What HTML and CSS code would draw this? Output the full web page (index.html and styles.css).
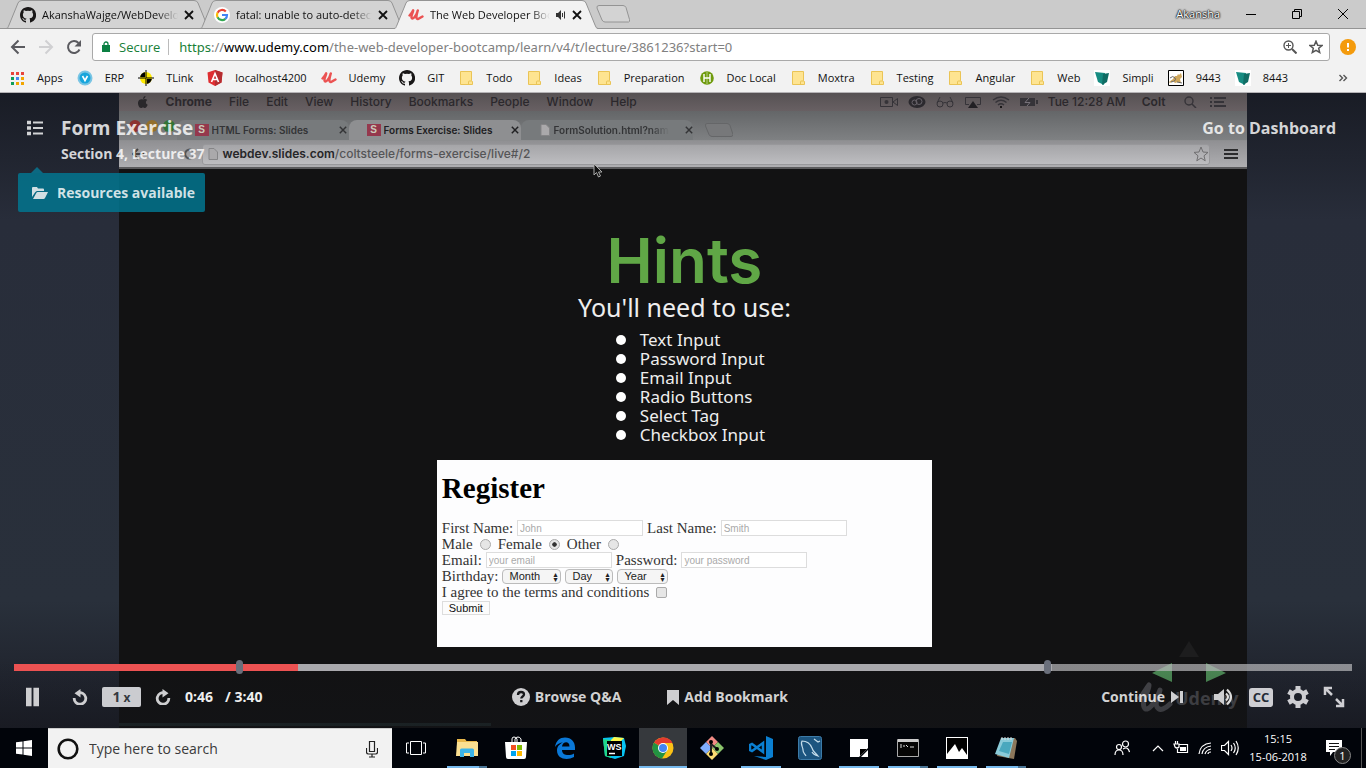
FILE: index.html
```html
<!DOCTYPE html>
<html lang="en">
<head>
<meta charset="utf-8">
<title>The Web Developer Bootcamp</title>
<link rel="stylesheet" href="styles.css">
</head>
<body>
<svg class="sprite" aria-hidden="true">
  <symbol id="github" viewBox="0 0 16 16"><path fill="#191717" d="M8 0C3.6 0 0 3.6 0 8c0 3.500 2.300 6.500 5.500 7.600.4.100.5-.2.5-.4v-1.500c-2.200.5-2.700-.9-2.700-.9-.4-.9-.9-1.200-.9-1.200-.7-.5.1-.5.1-.5.800.1 1.200.8 1.200.8.700 1.200 1.900.9 2.300.7.100-.5.300-.9.500-1.100-1.800-.2-3.600-.9-3.600-4 0-.9.300-1.600.8-2.100-.1-.2-.4-1 .1-2.100 0 0 .7-.2 2.200.8a7.500 7.500 0 0 1 4 0c1.500-1 2.200-.8 2.200-.8.400 1.100.2 1.900.1 2.100.5.600.8 1.300.8 2.100 0 3.100-1.900 3.700-3.700 3.900.3.300.6.800.6 1.500v2.300c0 .2.100.5.600.4A8 8 0 0 0 8 0z"/></symbol>
  <symbol id="udemy" viewBox="0 0 16 16"><path d="M1.500 8.500C3 7 4.500 5 5.200 3.300C5.200 5.500 3.200 8 3.500 10.500C4 13.300 8 10 9.800 3.500C9.200 6 8 8.700 8.500 11C9 13.200 12 11 14.500 9.500" fill="none" stroke="#eb5252" stroke-width="2.400" stroke-linecap="round" stroke-linejoin="round"/></symbol>
  <symbol id="folder" viewBox="0 0 16 16"><path d="M2.500 1.500h11v9l1 1v3h-12z" fill="#fee491" stroke="#eac456"/><path d="M10.500 14.500v-2.500q0-1 1-1h2.500" fill="none" stroke="#eac456"/></symbol>
  <symbol id="simpli" viewBox="0 0 16 16"><path fill="#fff" d="M0 0h16v16H0z"/><path fill="#178c82" d="M1 2l10 1-1 12-6-3z"/><path fill="#116d65" d="M9 4l6-1-2 9-5 3z"/></symbol>
  <symbol id="x" viewBox="0 0 10 10"><path d="M1 1l8 8M9 1L1 9" fill="none" stroke="currentColor" stroke-width="1.800"/></symbol>
  <symbol id="page" viewBox="0 0 10 12"><path d="M1 .5h5L9.500 4v7.500H1z" fill="#aaa9ab" stroke="#858587"/></symbol>
</svg>

<header class="tabstrip">
  <nav class="tabs" aria-label="Tabs">
    <div class="tab">
      <svg class="tab-shape" viewBox="0 0 204 29"><path d="M0 28.500C2 28.500 2 27 3 25L12 3Q13 .5 16 .5H188Q191 .5 192 3L201 25Q202 28.500 204 28.500z" fill="#d3d3d3" stroke="#949494"/></svg>
      <svg class="i16"><use href="#github"/></svg><a class="tab-title" href="#">AkanshaWajge/WebDevelopment</a>
      <button class="plain" aria-label="Close tab"><svg class="i10"><use href="#x"/></svg></button>
    </div>
    <div class="tab">
      <svg class="tab-shape" viewBox="0 0 204 29"><path d="M0 28.500C2 28.500 2 27 3 25L12 3Q13 .5 16 .5H188Q191 .5 192 3L201 25Q202 28.500 204 28.500z" fill="#d3d3d3" stroke="#949494"/></svg>
      <svg class="i16" viewBox="0 0 16 16"><circle cx="8" cy="8" r="8" fill="#fff"/><g fill="none" stroke-width="2.200"><path d="M11.800 4.500A5 5 0 0 0 3.600 5.800" stroke="#ea4335"/><path d="M3.600 5.600a5 5 0 0 0 0 4.800" stroke="#fbbc05"/><path d="M3.600 10.200a5 5 0 0 0 7.800 1.600" stroke="#34a853"/><path d="M11.300 11.900A5 5 0 0 0 13 8H8" stroke="#4285f4"/></g></svg><a class="tab-title" href="#">fatal: unable to auto-detect email</a>
      <button class="plain" aria-label="Close tab"><svg class="i10"><use href="#x"/></svg></button>
    </div>
    <div class="tab active">
      <svg class="tab-shape" viewBox="0 0 204 29"><path d="M0 29C2 28.500 2 27 3 25L12 3Q13 .5 16 .5H188Q191 .5 192 3L201 25Q202 28.500 204 29z" fill="#f2f2f2"/><path d="M0 28.500C2 28.500 2 27 3 25L12 3Q13 .5 16 .5H188Q191 .5 192 3L201 25Q202 28.500 204 28.500" fill="none" stroke="#949494"/></svg>
      <svg class="i16"><use href="#udemy"/></svg><a class="tab-title" href="#">The Web Developer Bootcamp</a>
      <svg class="i10" viewBox="0 0 10 10"><path d="M0 3h2l3-3v10L2 7H0z" fill="#333"/><path d="M6.500 3v4M8.500 1.500v7" stroke="#333" fill="none"/></svg>
      <button class="plain" aria-label="Close tab"><svg class="i10"><use href="#x"/></svg></button>
    </div>
    <button class="plain newtab" aria-label="New tab"><svg viewBox="0 0 34 18"><path d="M3 .5h24q2 0 3 2l3.500 12q.5 2.500-1 2.500H9q-2 0-3-2L1 3Q.5.5 3 .5z" fill="#d3d3d3" stroke="#949494"/></svg></button>
  </nav>
  <span class="user">Akansha</span>
  <button class="win" aria-label="Minimize"><svg viewBox="0 0 10 10"><path d="M0 5.500h10" stroke="#000"/></svg></button>
  <button class="win" aria-label="Restore"><svg viewBox="0 0 10 10"><path d="M.5 2.500h7v7h-7zM2.500 2.500v-2h7v7h-2" fill="none" stroke="#000"/></svg></button>
  <button class="win" aria-label="Close"><svg viewBox="0 0 10 10"><path d="M0 0l10 10M10 0L0 10" stroke="#000"/></svg></button>
</header>

<div class="toolbar">
  <button class="plain" aria-label="Back"><svg class="i16" viewBox="0 0 16 16"><path d="M15 8H2M8.500 1.500L2 8l6.500 6.500" fill="none" stroke="#5a5a5f" stroke-width="2"/></svg></button>
  <button class="plain" aria-label="Forward"><svg class="i16" viewBox="0 0 16 16"><path d="M1 8h13M7.500 1.500L14 8l-6.500 6.500" fill="none" stroke="#d0d0d2" stroke-width="2"/></svg></button>
  <button class="plain" aria-label="Reload"><svg class="i16" viewBox="0 0 16 16"><path d="M13.500 10.500A6 6 0 1 1 12.500 4" fill="none" stroke="#5a5a5f" stroke-width="2"/><path d="M15 1v6.500H8.500z" fill="#5a5a5f"/></svg></button>
  <div class="omnibox">
    <svg class="lock" viewBox="0 0 8 12"><path d="M2 5V3a2 2 0 0 1 4 0v2" fill="none" stroke="#0b8043" stroke-width="1.300"/><rect y="4" width="8" height="7" fill="#0b8043"/></svg>
    <span class="secure">Secure</span>
    <div class="url" role="textbox" contenteditable="true" spellcheck="false" aria-label="Address"><span class="secure-part">https</span>://<span class="host">www.udemy.com</span>/the-web-developer-bootcamp/learn/v4/t/lecture/3861236?start=0</div>
    <button class="plain" aria-label="Zoom"><svg class="i14" viewBox="0 0 14 14"><circle cx="5.500" cy="5.500" r="4.500" fill="none" stroke="#555" stroke-width="1.400"/><path d="M9 9l4.500 4.500" stroke="#555" stroke-width="2"/><path d="M3 5.500h5M5.500 3v5" stroke="#555"/></svg></button>
    <button class="plain" aria-label="Bookmark"><svg class="i14" viewBox="0 0 14 14"><path d="M7 1.200l1.700 4 4.300.3-3.300 2.800 1 4.200L7 10.300l-3.700 2.200 1-4.200L1 5.500l4.300-.3z" fill="none" stroke="#555" stroke-width="1.500"/></svg></button>
  </div>
  <button class="plain" aria-label="Update available"><svg class="i16" viewBox="0 0 16 16"><circle cx="8" cy="8" r="8" fill="#f49b0d"/><path d="M8 4v4.500M8 10v2" stroke="#fff" stroke-width="2"/></svg></button>
</div>

<nav class="bookmarks" aria-label="Bookmarks">
  <a href="#"><svg class="i16" viewBox="0 0 16 16"><path fill="#e8453c" d="M2 2h3v3H2zM7 2h3v3H7zM12 2h3v3h-3z"/><path fill="#109d58" d="M2 7h3v3H2zM2 12h3v3H2z"/><path fill="#4688f1" d="M7 7h3v3H7z"/><path fill="#f2a600" d="M12 7h3v3h-3zM12 12h3v3h-3zM7 12h3v3H7z"/></svg>Apps</a>
  <a href="#"><svg class="i16" viewBox="0 0 16 16"><circle cx="8" cy="8" r="7.500" fill="#7ac5e4"/><circle cx="8" cy="8" r="5.500" fill="#16a5dc"/><path d="M5.500 6L8 10.500 10.500 6" fill="none" stroke="#fff" stroke-width="1.600"/></svg>ERP</a>
  <a href="#"><svg class="i16" viewBox="0 0 16 16"><circle cx="8" cy="8" r="6" fill="#ffeb00"/><path d="M8 8V2A6 6 0 0 0 2 8zM8 8v6A6 6 0 0 0 14 8zM0 7.500h16v1H0zM7.500 0h1v16h-1z"/></svg>TLink</a>
  <a href="#"><svg class="i16" viewBox="0 0 16 16"><path fill="#df2e31" d="M8 0l7.500 2.500-1 10L8 16l-6.500-3.500-1-10z"/><path fill="#b52d30" d="M8 0l7.500 2.500-1 10L8 16z"/><path d="M4.500 12L8 3.500l3.500 8.500M6 9.500h4" fill="none" stroke="#fff" stroke-width="1.600"/></svg>localhost4200</a>
  <a href="#"><svg class="i16"><use href="#udemy"/></svg>Udemy</a>
  <a href="#"><svg class="i16"><use href="#github"/></svg>GIT</a>
  <a href="#"><svg class="i16"><use href="#folder"/></svg>Todo</a>
  <a href="#"><svg class="i16"><use href="#folder"/></svg>Ideas</a>
  <a href="#"><svg class="i16"><use href="#folder"/></svg>Preparation</a>
  <a href="#"><svg class="i16" viewBox="0 0 16 16"><circle cx="8" cy="8" r="6.800" fill="#6f9b0d"/><path d="M5 4v8M11 4v8M5 8h6" stroke="#fff" stroke-width="1.400" fill="none"/><path d="M8 2v12" stroke="#fff" stroke-width=".5"/></svg>Doc Local</a>
  <a href="#"><svg class="i16"><use href="#folder"/></svg>Moxtra</a>
  <a href="#"><svg class="i16"><use href="#folder"/></svg>Testing</a>
  <a href="#"><svg class="i16"><use href="#folder"/></svg>Angular</a>
  <a href="#"><svg class="i16"><use href="#folder"/></svg>Web</a>
  <a href="#"><svg class="i16"><use href="#simpli"/></svg>Simpli</a>
  <a href="#"><svg class="i16" viewBox="0 0 16 16"><path d="M.5.500h15v15H.5z" fill="#fff" stroke="#000"/><path d="M7 6l2 0 1-2 1 1 2-2 1 4-2 2 1 4-3-1-3 1-2-2-3 2-1-1 4-3z" fill="#cfa75c"/><path d="M2 8q3-3 5 0t-4 4M9 12l5 1" fill="none" stroke="#666"/></svg>9443</a>
  <a href="#"><svg class="i16"><use href="#simpli"/></svg>8443</a>
  <button class="plain more" aria-label="More bookmarks"><svg class="i10" viewBox="0 0 10 10"><path d="M1.500 2l3 3-3 3M5.500 2l3 3-3 3" fill="none" stroke="#555" stroke-width="1.400"/></svg></button>
</nav>

<main class="player">
  <section class="video" aria-label="Lecture video">
    <div class="mac-menu">
      <svg class="i12" viewBox="0 0 12 12"><path d="M6 3.500c1-.6 3-.8 4.300.5-2 1.200-1.800 4 .4 4.700C10 10.500 9 12 8 12c-1 0-1-.5-2-.5S5 12 4 12C2 12 .8 8.500 1 6.500 1.200 3.500 4 2.500 6 3.500zM6 3c0-1.500 1-2.800 2.500-3C8.500 1.500 7.500 2.800 6 3z" fill="#29272a"/></svg>
      <b>Chrome</b><span>File</span><span>Edit</span><span>View</span><span>History</span><span>Bookmarks</span><span>People</span><span>Window</span><span>Help</span>
      <span class="mac-status">
        <svg viewBox="0 0 18 12"><path d="M.5 1.500h12v9H.5zM13 6l4.500-3.500v7z" fill="none" stroke="#353338"/><circle cx="6.500" cy="6" r="2" fill="#353338"/></svg>
        <svg viewBox="0 0 18 12"><ellipse cx="9" cy="6" rx="8.500" ry="6" fill="#2b292e"/><circle cx="6.500" cy="6.500" r="2.500" fill="none" stroke="#68636a"/><circle cx="11" cy="5.500" r="3" fill="none" stroke="#68636a"/></svg>
        <svg viewBox="0 0 18 12"><circle cx="4" cy="8" r="3" fill="none" stroke="#353338"/><circle cx="14" cy="8" r="3" fill="none" stroke="#353338"/><path d="M1 7L4 1M17 7l-3-6M7 7q2-1 4 0" fill="none" stroke="#353338"/></svg>
        <svg viewBox="0 0 18 12"><path d="M5 8.500H1.500v-7h15v7H13" fill="none" stroke="#353338"/><path d="M9 5l5 7H4z" fill="#222024"/></svg>
        <svg viewBox="0 0 18 12"><path d="M1 4q8-6 16 0M3.500 6.500q5.500-4.500 11 0M6 9q3-2.500 6 0" fill="none" stroke="#353338" stroke-width="1.400"/><circle cx="9" cy="11" r="1"/></svg>
        <svg viewBox="0 0 18 12"><path d="M0 2h15v8H0zM16 4h2v4h-2z" fill="#353338"/><path d="M9 2L5 6.500h5L7 10" fill="none" stroke="#77727a"/></svg>
        <span>Tue 12:28 AM</span><span class="strong">Colt</span>
        <svg viewBox="0 0 18 12"><circle cx="8" cy="5" r="4" fill="none" stroke="#353338" stroke-width="1.400"/><path d="M11 8l4 4" stroke="#353338" stroke-width="1.500"/></svg>
        <svg viewBox="0 0 18 12"><path d="M1 2h2M5 2h12M1 6h2M5 6h10M1 10h2M5 10h12" stroke="#353338" stroke-width="2"/></svg>
      </span>
    </div>
    <div class="mac-tabs">
      <span class="lights"><i class="red"></i><i class="amber"></i><i class="green"></i></span>
      <span class="mtab"><i class="s-logo">S</i><span class="mtab-title">HTML Forms: Slides</span><svg class="i8"><use href="#x"/></svg></span>
      <span class="mtab current"><i class="s-logo">S</i><span class="mtab-title">Forms Exercise: Slides</span><svg class="i8"><use href="#x"/></svg></span>
      <span class="mtab"><svg class="i12"><use href="#page"/></svg><span class="mtab-title fade">FormSolution.html?name=</span><svg class="i8"><use href="#x"/></svg></span>
      <svg class="mac-new" viewBox="0 0 28 14"><path d="M2 .5h20q2 0 3 2l3 9q0 2-2 2H7q-2 0-3-2L.5 3Q0 .5 2 .5z" fill="#77787a" stroke="#656668"/></svg>
    </div>
    <div class="mac-bar">
      <svg class="mac-nav" viewBox="0 0 70 12"><path d="M12 6H1M6 1L1 6l5 5" fill="none" stroke="#444" stroke-width="2"/><path d="M30 6h10M36 1l5 5-5 5" fill="none" stroke="#9c9b9e" stroke-width="2"/><path d="M61 9a4.500 4.500 0 1 1 0-6" fill="none" stroke="#555" stroke-width="2"/></svg>
      <div class="mac-url"><svg class="i12"><use href="#page"/></svg><span><b>webdev.slides.com</b>/coltsteele/forms-exercise/live#/2</span>
        <svg class="mac-star" viewBox="0 0 16 16"><path d="M8 1l2 5 5 .4-4 3.400 1.200 5L8 12l-4.200 2.800 1.200-5L1 6.400 6 6z" fill="none" stroke="#6f6e70"/></svg></div>
      <svg class="i14" viewBox="0 0 14 14"><path d="M0 3h14M0 7h14M0 11h14" stroke="#2b2b2d" stroke-width="2"/></svg>
    </div>
    <div class="slide">
      <h1>Hints</h1>
      <p class="need">You'll need to use:</p>
      <ul class="hints"><li>Text Input</li><li>Password Input</li><li>Email Input</li><li>Radio Buttons</li><li>Select Tag</li><li>Checkbox Input</li></ul>
      <form class="register">
        <h2>Register</h2>
        <div class="row"><label for="fn">First Name:</label><input id="fn" type="text" placeholder="John"><label for="ln">Last Name:</label><input id="ln" type="text" placeholder="Smith"></div>
        <div class="row radios"><label for="m">Male</label><input id="m" type="radio" name="g"><label for="f">Female</label><input id="f" type="radio" name="g" checked><label for="o">Other</label><input id="o" type="radio" name="g"></div>
        <div class="row"><label for="em">Email:</label><input id="em" type="email" placeholder="your email"><label for="pw">Password:</label><input id="pw" type="password" placeholder="your password"></div>
        <div class="row"><label for="mo">Birthday:</label>
          <span class="pick"><select id="mo"><option>Month</option></select></span><span class="pick"><select aria-label="Day"><option>Day</option></select></span><span class="pick"><select aria-label="Year"><option>Year</option></select></span></div>
        <div class="row radios"><label for="ag">I agree to the terms and conditions</label><input id="ag" type="checkbox"></div>
        <div class="row"><button type="button" class="submit">Submit</button></div>
      </form>
    </div>
    <svg class="pointer" viewBox="0 0 10 15"><path d="M1 1v11l2.500-2.500L5.500 14l2-1L5.500 9H9z" fill="#111" stroke="#aaa"/></svg>
    <svg class="slide-nav" viewBox="0 0 74 42"><path d="M37 0l10 16H27z" fill="#1d1d1e"/><path d="M0 32l20-10v19zM74 32L54 22v19z" fill="#4c8a55"/></svg>
    <div class="watermark"><svg viewBox="0 0 38 32"><path d="M3 16C7 11 9 7 12 3C12 10 4 18 7 25C10 32 19 20 23 8C22 14 17 20 20 25C23 30 29 26 33 22" fill="none" stroke="#46464a" stroke-width="5" stroke-linecap="round" stroke-linejoin="round"/></svg><span>Udemy</span></div>
    <div class="video-line"></div>
  </section>

  <div class="overlay">
    <div class="lecture-head">
      <button class="plain" aria-label="Course contents"><svg class="i16" viewBox="0 0 16 16"><path d="M0 2.500h4M0 8h4M0 13.500h4" stroke="#d2d3d5" stroke-width="3.600"/><path d="M6 2.500h10M6 8h10M6 13.500h10" stroke="#d2d3d5" stroke-width="2"/></svg></button>
      <div><div class="lecture-title">Form Exercise</div><div class="lecture-sub">Section 4, Lecture 37</div></div>
      <a class="dashboard" href="#">Go to Dashboard</a>
    </div>
    <button class="resources"><svg viewBox="0 0 16 12"><path d="M0 10V1q0-1 1-1h4l1 1.500h5q1 0 1 1V4H5Q4 4 3 5.500z"/><path d="M1 12l3-5.500Q4.500 5 5.500 5H16l-3 6q-.5 1-1.500 1z"/></svg>Resources available</button>
    <div class="controls">
      <div class="seek"><input type="range" min="0" max="220" value="46" aria-label="Seek"><i class="mark start"></i><i class="mark end"></i></div>
      <div class="buttons">
        <div class="left">
          <button class="plain" aria-label="Pause"><svg class="pause" viewBox="0 0 14 20"><path d="M0 0h6v20H0zM8 0h6v20H8z"/></svg></button>
          <button class="plain" aria-label="Rewind 15 seconds"><svg class="i16" viewBox="0 0 16 16"><path d="M6 4A5.800 5.800 0 1 1 2.200 9" class="ring"/><path d="M8.500 0v8.500L2.500 4.300z"/></svg></button>
          <button class="speed">1<small>x</small></button>
          <button class="plain" aria-label="Forward 15 seconds"><svg class="i16" viewBox="0 0 16 16"><path d="M10 4A5.800 5.800 0 1 0 13.800 9" class="ring"/><path d="M7.500 0v8.500l6-4.200z"/></svg></button>
          <span class="time">0:46</span><span class="time total">/ 3:40</span>
        </div>
        <div class="middle">
          <button class="plain"><svg class="i18" viewBox="0 0 18 18"><circle cx="9" cy="9" r="9"/><path d="M6 7q0-3 3-3t3 2.500c0 2-2.700 2-2.700 4M9.300 12v2.300" fill="none" stroke="#151619" stroke-width="2.300"/></svg>Browse Q&amp;A</button>
          <button class="plain"><svg class="flag" viewBox="0 0 12 15"><path d="M0 0h12v15L6 10l-6 5z"/></svg>Add Bookmark</button>
        </div>
        <div class="right">
          <button class="plain continue">Continue<svg class="i12" viewBox="0 0 12 12"><path d="M0 0l8 6-8 6zM9 0h3v12H9z"/></svg></button>
          <button class="plain" aria-label="Volume"><svg class="i22" viewBox="0 0 22 22"><path d="M1 8h4l6-5v16l-6-5H1z"/><path d="M13 7.500q4 3.500 0 7M14 3.500q8 7.500 0 15" fill="none" stroke="#dcdcdc" stroke-width="2.200"/></svg></button>
          <button class="cc" aria-label="Captions">CC</button>
          <button class="plain" aria-label="Settings"><svg class="i22" viewBox="0 0 22 22"><circle cx="11" cy="11" r="6" fill="none" stroke="#ceced2" stroke-width="4"/><path d="M11 0v4M11 18v4M1.500 5.500L5 7.500M17 14.500l3.500 2M1.500 16.500L5 14.500M17 7.500l3.500-2" stroke="#ceced2" stroke-width="5"/></svg></button>
          <button class="plain" aria-label="Full screen"><svg class="i22" viewBox="0 0 22 22"><path d="M2 9V2h7M2 2l7 7M20 13v7h-7M20 20l-7-7" fill="none" stroke="#ceced2" stroke-width="2.500"/></svg></button>
        </div>
      </div>
    </div>
  </div>
</main>

<footer class="taskbar">
  <button class="task" aria-label="Start"><svg class="i16" viewBox="0 0 16 16"><path fill="#fff" d="M0 2.300L6.500 1.400V7.500H0zM7.500 1.200L16 0v7.500H7.500zM0 8.500h6.500v6.100L0 13.700zM7.500 8.500H16V16l-8.500-1.200z"/></svg></button>
  <label class="search"><svg class="cortana" viewBox="0 0 22 22"><circle cx="11" cy="11" r="9.300" fill="none" stroke="#111" stroke-width="2.600"/></svg><input type="text" placeholder="Type here to search" aria-label="Search"><svg class="mic" viewBox="0 0 12 18"><path d="M3.500 1.500h5v10h-5zM.5 8v4q0 2 2 2h7q2 0 2-2V8M6 14v3M3 17h6" fill="none" stroke="#222" stroke-width="1.200"/></svg></label>
  <button class="task" aria-label="Task view"><svg class="i20" viewBox="0 0 20 20"><path d="M4.500 3.500h11v13h-11zM3 5H.5v10H3M17 5h2.500v10H17" fill="none" stroke="#fff"/></svg></button>
  <div class="apps">
    <button class="task open stacked" aria-label="File Explorer"><svg class="i24" viewBox="0 0 24 24"><path d="M2 3h8l1.500 2H22v15H2z" fill="#e9b84b"/><path d="M2 6h21v14H1z" fill="#fbe091"/><path d="M5 21v-7q0-1.500 1.500-1.500h11q1.500 0 1.500 1.500v7h-4v-4H9v4z" fill="#3cb4e8"/></svg></button>
    <button class="task" aria-label="Store"><svg class="i24" viewBox="0 0 24 24"><path d="M8 8V3q0-2 2-2t3 2v4M11 7V3q1-2 3-2t3 2v5" fill="none" stroke="#fff"/><path d="M1 6h22l-1 15q0 2-2 2H4q-2 0-2-2z" fill="#fff"/><path d="M7 9h5v5H7z" fill="#f25022"/><path d="M13 9h5v5h-5z" fill="#7fba00"/><path d="M7 15h5v5H7z" fill="#00a4ef"/><path d="M13 15h5v5h-5z" fill="#ffb900"/></svg></button>
    <button class="task" aria-label="Edge"><svg class="i24" viewBox="0 0 24 24"><path d="M2 11C3 4.500 7 1.500 12 1.500c6.500 0 10 4.500 10 10V14H9c0 6 8 6 12 3.500V21c-7 4-17 2-17-6.500 0-4 2.500-6.500 6-8-3 0-6 1.500-8 4.500zM9 10.500h7.500c0-6-7-5-7.500 0z" fill="#0a78d7"/></svg></button>
    <button class="task" aria-label="WebStorm"><svg class="i24" viewBox="0 0 24 24"><path d="M1 2l12-1 9 1 2 8-2 10-9 3-10-3z" fill="#07c3f2"/><path d="M12 1l10 1-6 6-8-3z" fill="#fcf84a"/><path d="M1 3l8 1v18l-6-2z" fill="#21d789"/><path d="M5 5h15v15H5z"/><path d="M7 17.500h6" stroke="#fff" stroke-width="1.500"/><text x="5" y="14" class="ws">WS</text></svg></button>
    <button class="task open current" aria-label="Chrome"><svg class="i22" viewBox="0 0 22 22"><circle cx="11" cy="11" r="10.500" fill="#fbc116"/><path d="M11 11L2 5.500A10.500 10.500 0 0 0 10 21.500L15.500 13z" fill="#229342"/><path d="M11 11L2 5.500Q5 1 11 .5q7 0 9.500 5.500H11z" fill="#e33b2e"/><circle cx="11" cy="11" r="5" fill="#fff"/><circle cx="11" cy="11" r="4" fill="#4285f4"/></svg></button>
    <button class="task" aria-label="Git"><svg class="i24" viewBox="0 0 24 24"><path d="M12 0l6 6-6 6-6-6z" fill="#f28b85"/><path d="M6 6l6 6-6 6-6-6z" fill="#80aeff"/><path d="M18 6l6 6-6 6-6-6z" fill="#8bc56c"/><path d="M12 12l6 6-6 6-6-6z" fill="#fbdc72"/><path d="M11 5v13M11 8l6 5" stroke="#222" stroke-width="2"/><circle cx="11" cy="6" r="2"/><circle cx="11" cy="18" r="2"/><circle cx="17" cy="13" r="2"/></svg></button>
    <button class="task open" aria-label="Visual Studio Code"><svg class="i24" viewBox="0 0 24 24"><path d="M17 0l7 3v18l-7 3L5 20l12 1z" fill="#0a7fd1"/><path d="M14 7L3 15l-2-1V9l2-1 11 8z" fill="none" stroke="#0a7fd1" stroke-width="2.500"/></svg></button>
    <button class="task" aria-label="MySQL Workbench"><svg class="i24" viewBox="0 0 24 24"><rect x=".5" y=".5" width="23" height="23" rx="2" fill="#1c5580" stroke="#3c7ba8"/><path d="M8 20c-2-3-3-3-3-6S2 8 4 5c4 0 8 2 10 7 1 4 3 4 6 8-3-1-5-2-6-4M16 3l4 3 2-1" fill="none" stroke="#c4dcea" stroke-width="1.200"/></svg></button>
    <button class="task open" aria-label="Sticky Notes"><svg class="i18" viewBox="0 0 18 18"><path d="M0 0h18v9l-9 9H0z" fill="#fff"/><path d="M10 17v-7h7z" fill="#000"/><path d="M18 11v7h-7z" fill="#fff"/></svg></button>
    <button class="task open stacked" aria-label="Command Prompt"><svg class="i24" viewBox="0 0 24 24"><path d="M1.500 3.500h21v17h-21z" fill="#050505" stroke="#aaa"/><path d="M2 3h20v3H2z" fill="#ccc"/><path d="M4 9h2M4 11h2M8 9v2M10 9l2 2M14 11h4" stroke="#ddd"/></svg></button>
    <button class="task open" aria-label="Photos"><svg class="i22" viewBox="0 0 22 22"><path d="M0 0h22v22H0z" fill="#fff"/><path d="M1 1h20v17l-5-7-3 4-4-8-8 10z" fill="#000"/></svg></button>
    <button class="task open stacked" aria-label="Notepad"><svg class="i24" viewBox="0 0 24 24"><path d="M8 2h13l2 3-3 18-17-3z" fill="#8c775b"/><path d="M7 2h13l-5 20-14-4z" fill="#8acbd9"/><path d="M9 6h9l-3 12-10-3z" fill="#4aa8be"/><path d="M8 1v3M11 1v3M14 1v3M17 1v3" stroke="#ddd"/></svg></button>
  </div>
  <div class="tray">
    <svg class="i16" viewBox="0 0 16 16"><circle cx="5" cy="7" r="2.500" class="line"/><circle cx="11.500" cy="4" r="3" class="line"/><path class="line" d="M1 15q0-5 4-5t4 5M9 9q5-3 6.500 3"/></svg>
    <svg class="i12 chevron" viewBox="0 0 12 12"><path class="line" d="M1 9l5-5 5 5"/></svg>
    <svg class="i16" viewBox="0 0 16 16"><path class="line" d="M6 4.500h8.500v8H4.500V9M1 4h5v3q-2 2-4 0zM2.500 4V1M4.500 4V1"/><path fill="#fff" d="M7 7h6v4H7z"/></svg>
    <svg class="i14" viewBox="0 0 14 14"><path class="line" d="M1 13Q2 3 13 2M4 13q1-7 9-8M7 13q1-4 6-5M10 13q0-2 3-2"/></svg>
    <svg class="i18" viewBox="0 0 18 16"><path class="line" d="M.5 5.500h3l4-4v13l-4-4h-3zM10 5q2 3 0 6M12.500 3q3.500 5 0 10M15 1q4.500 7 0 14"/></svg>
    <div class="clock"><span>15:15</span><span>15-06-2018</span></div>
    <button class="plain notice" aria-label="Notifications"><svg class="i18" viewBox="0 0 18 18"><path d="M1 1h16v12H8l-3 4v-4H1z" fill="#fff"/><path d="M4 4.500h10M4 7.500h10M4 10.500h6" stroke="#111"/></svg><span class="count">1</span></button>
  </div>
</footer>
</body>
</html>
```
FILE: styles.css
```css
* { box-sizing: border-box; }
body {
  margin: 0;
  height: 100vh;
  display: flex;
  flex-direction: column;
  overflow: hidden;
  background: #f2f2f2;
  color: #111;
  font: 12px/16px "Open Sans", "Noto Sans", sans-serif;
}
svg { flex: none; display: block; }
a { color: inherit; text-decoration: none; }
button, input, select { font: inherit; color: inherit; }
button { flex: none; border: 0; padding: 0; }
.sprite { display: none; }
.plain { background: none; display: flex; align-items: center; }
.i8 { width: 8px; height: 8px; }
.i10 { width: 10px; height: 10px; }
.i12 { width: 12px; height: 12px; }
.i14 { width: 14px; height: 14px; }
.i16 { width: 16px; height: 16px; }
.i18 { width: 18px; height: 18px; }
.i20 { width: 20px; height: 20px; }
.i22 { width: 22px; height: 22px; }
.i24 { width: 24px; height: 24px; }

/* Browser tabs */
.tabstrip { flex: none; display: flex; height: 29px; background: #cbcbcb; border-bottom: 1px solid #949494; }
.tabs { flex: 1; display: flex; padding-left: 6px; }
.tab {
  position: relative;
  display: flex;
  align-items: center;
  gap: 6px;
  width: 204px;
  height: 29px;
  margin-right: -10px;
  padding: 0 16px 0 14px;
}
.tab > * { position: relative; }
.tab .tab-shape { position: absolute; inset: 0; width: 204px; height: 29px; }
.tab.active { z-index: 1; }
.tab-title {
  flex: 1;
  overflow: hidden;
  white-space: nowrap;
  font-size: 11px;
  mask-image: linear-gradient(90deg, #000 85%, transparent);
}
.newtab { align-self: center; margin-left: 8px; }
.newtab svg { width: 34px; height: 18px; }
.user { align-self: center; margin-right: 8px; color: #fff; font-size: 11px; text-shadow: 0 0 2px #000, 0 0 2px #000, 0 0 1px #000; }
.win { width: 46px; background: none; display: grid; place-items: center; }
.win svg { width: 10px; height: 10px; }

/* Address row */
.toolbar { flex: none; display: flex; align-items: center; gap: 12px; height: 35px; padding: 0 10px; }
.omnibox {
  flex: 1;
  display: flex;
  align-items: center;
  gap: 12px;
  height: 28px;
  margin-left: -2px;
  margin-right: -2px;
  padding: 0 6px 0 9px;
  background: #fff;
  border: 1px solid #a9a9a9;
  border-radius: 3px;
}
.lock { width: 8px; height: 12px; }
.secure { margin-left: -3px; padding-right: 8px; border-right: 1px solid #bbb; color: #188038; font-size: 13px; }
.url { flex: 1; margin-left: -2px; color: #808080; font-family: "Noto Sans", "Open Sans", sans-serif; font-size: 13px; white-space: nowrap; outline: 0; }
.secure-part { color: #188038; }
.host { color: #000; }

/* Bookmarks */
.bookmarks { flex: none; display: flex; align-items: center; gap: 14px; height: 29px; padding: 0 18px 0 9px; border-bottom: 1px solid #b5b3b6; font-size: 11px; }
.bookmarks a { display: flex; align-items: center; gap: 12px; white-space: nowrap; }
.more { margin-left: auto; }

/* Player */
.player {
  position: relative;
  flex: 1;
  min-height: 0;
  display: flex;
  justify-content: center;
  background: linear-gradient(#191c25, #282d3a 20%, #29303b 80%, #1b1d26);
}
.video { position: relative; height: 100%; aspect-ratio: 16 / 9; display: flex; flex-direction: column; background: #121213; overflow: hidden; }
.mac-menu, .mac-status { display: flex; align-items: center; gap: 17px; }
.mac-menu { height: 18px; padding: 0 20px 0 18px; background: linear-gradient(#565153, #686063); color: #2b282c; font: 500 12px/16px Inter, sans-serif; }
.mac-menu b { font-weight: 700; }
.mac-status { margin-left: auto; gap: 10px; }
.mac-status svg { width: 18px; height: 12px; }
.mac-status .strong { margin: 0 6px; font-weight: 600; }
.mac-tabs { display: flex; align-items: flex-end; height: 30px; padding-left: 10px; border-bottom: 1px solid #8d8e90; background: linear-gradient(#646668, #7f8183); font: 600 10px/16px Inter, sans-serif; color: #242426; }
.lights { display: flex; gap: 5px; margin: 0 2px 8px 0; }
.lights i { width: 12px; height: 12px; border-radius: 50%; }
.red { background: #8d3232; }
.amber { background: #93702b; }
.green { background: #327436; }
.mtab { display: flex; align-items: center; gap: 3px; width: 172px; height: 20px; padding: 0 2px 0 18px; background: #777a7c; border-radius: 8px 8px 0 0; color: #333436; }
.mtab.current { background: #8e8f91; color: #202022; }
.mtab:nth-last-of-type(1) { padding-right: 0; }
.mtab-title { flex: 1; overflow: hidden; white-space: nowrap; }
.fade { mask-image: linear-gradient(90deg, #000 75%, transparent 90%); }
.s-logo { width: 14px; height: 12px; background: #95384d; color: #ccb; font: 700 10px/12px "Liberation Sans", sans-serif; text-align: center; }
.mac-new { width: 28px; height: 14px; margin: 0 0 3px 12px; }
.mac-bar { display: flex; align-items: center; gap: 14px; height: 28px; padding: 0 9px 0 13px; background: linear-gradient(#909093, #aeaeb1); border-bottom: 2px solid #5b5b5d; }
.mac-nav { width: 70px; height: 12px; margin-right: -14px; }
.mac-url { flex: 1; display: flex; align-items: center; gap: 4px; height: 21px; padding-left: 4px; background: linear-gradient(#a5a5a8, #bdbdc0); border: 1px solid #98989b; border-radius: 3px; color: #555557; font: 500 12px/16px Inter, sans-serif; }
.mac-url b { color: #262628; font-weight: 600; }
.mac-star { width: 16px; height: 16px; margin-left: auto; }
.slide { flex: 1; display: flex; flex-direction: column; align-items: center; padding: 62px 0 0 3px; color: #eee; font-family: "Noto Sans", "Open Sans", sans-serif; }
.slide h1 { margin: 0; color: #60a746; font: 600 62px/60px Inter, sans-serif; }
.need { margin: 0; font-size: 25px; line-height: 32px; }
.hints { margin: 7px 0 16px; padding: 0 0 0 12px; list-style: none; font-size: 17px; line-height: 19px; }
.hints li { display: flex; align-items: center; gap: 14px; }
.hints li::before { content: ""; width: 10px; height: 10px; border-radius: 50%; background: #fff; }
.register { width: 44%; padding: 12px 5px 31px; background: #fdfdfe; color: #333; font: 15px/16px "Liberation Serif", serif; }
.register h2 { margin: 0 0 16px; color: #000; font-size: 29px; line-height: 32px; }
.row { display: flex; align-items: center; gap: 4px; height: 16px; }
.row input[type="text"], .row input[type="email"], .row input[type="password"] { width: 126px; height: 16px; padding: 0 2px; border: 1px solid #ddd; background: #fff; font: 10px/12px "Liberation Sans", sans-serif; }
.row input::placeholder { color: #aaa; opacity: 1; }
.radios { gap: 7px; }
.radios input { appearance: none; width: 11px; height: 11px; margin: 0; border: 1px solid #aaa; border-radius: 50%; background: #e6e6e6; }
.radios input[type="radio"]:checked { background: radial-gradient(#333 30%, #e6e6e6 40%); }
.radios input[type="checkbox"] { border-radius: 2px; }
.pick { position: relative; }
.pick::after { content: "\25B4\A\25BE"; position: absolute; right: 4px; top: 3px; white-space: pre; color: #222; font: 8px/5px "DejaVu Sans", sans-serif; pointer-events: none; }
.pick select { display: block; appearance: none; height: 15px; padding: 0 20px 0 6px; border: 1px solid #bbb; border-radius: 4px; background: #f5f5f5; color: #222; font: 11px/12px "Liberation Sans", sans-serif; }
.submit { width: 48px; height: 14px; border: 1px solid #ddd; background: #fcfcfc; color: #111; font: 11px/12px "Liberation Sans", sans-serif; }
.pointer { position: absolute; left: 42%; top: 70px; width: 10px; height: 15px; }
.slide-nav { position: absolute; right: 21px; bottom: 45px; width: 74px; height: 42px; }
.watermark { position: absolute; right: 9px; bottom: 14px; display: flex; align-items: center; gap: 0; color: #46464a; font: 700 18px/24px "Open Sans", sans-serif; }
.watermark svg { width: 38px; height: 32px; }
.video-line { position: absolute; left: 0; bottom: 2px; width: 33%; height: 3px; background: #1d2627; }

/* Controls shown above the video */
.overlay { position: absolute; inset: 0; display: flex; flex-direction: column; align-items: flex-start; color: rgba(255, 255, 255, .82); font-weight: 700; }
.lecture-head { display: flex; align-items: flex-start; gap: 18px; width: 100%; padding: 22px 30px 0 27px; }
.lecture-head button { margin-top: 5px; }
.lecture-title { font-size: 19px; line-height: 26px; }
.lecture-sub { font-size: 14px; line-height: 26px; }
.dashboard { margin-left: auto; font-size: 16px; line-height: 26px; }
.resources { position: relative; display: flex; align-items: center; gap: 9px; height: 39px; margin: 6px 0 0 18px; padding: 0 10px 0 14px; border-radius: 2px; background: rgba(2, 117, 143, .85); font-size: 14px; font-weight: 700; }
.resources::before { content: ""; position: absolute; left: 13px; top: -6px; border: 6px solid transparent; border-top: 0; border-bottom-color: #0c6982; }
.resources svg { width: 16px; height: 12px; fill: #d2dfe3; }
.controls { width: 100%; margin-top: auto; padding: 0 14px 15px; background: linear-gradient(transparent, rgba(20, 22, 28, .3)); }
.controls svg { fill: #ceced0; }
.seek { position: relative; height: 14px; display: flex; align-items: center; }
.seek input { appearance: none; width: 100%; height: 7px; margin: 0; background: linear-gradient(90deg, #ec5252 21.2%, #a9a9ad 21.2%, #a9a9ad 77.6%, rgba(185, 185, 188, .7) 77.6%); }
.seek input::-webkit-slider-thumb { appearance: none; width: 1px; height: 7px; }
.mark { position: absolute; width: 7px; height: 14px; border-radius: 4px; background: #6a6f7b; }
.start { left: 16.6%; }
.end { left: 77%; }
.buttons { display: flex; align-items: center; height: 32px; margin-top: 7px; font-size: 14px; line-height: 20px; }
.left { flex: 0 0 37.2%; display: flex; align-items: center; gap: 14px; padding-left: 12px; }
.middle { flex: 1; display: flex; align-items: center; gap: 46px; }
.middle button { gap: 5px; font-weight: 700; }
.right { display: flex; align-items: center; gap: 14px; padding-right: 7px; }
.pause { width: 13px; height: 20px; margin-right: 19px; }
.ring { fill: none; stroke: #ceced0; stroke-width: 2.800; }
.speed { width: 39px; height: 20px; border-radius: 2px; background: #cbccd0; color: #353940; font-size: 14px; line-height: 20px; }
.speed small { margin-left: 3px; font-size: 12px; }
.time { color: #eee; }
.total { margin-left: -2px; }
.flag { width: 12px; height: 15px; }
.continue { gap: 6px; margin-right: 16px; font-weight: 700; }
.cc { width: 24px; height: 19px; border-radius: 3px; background: #ceced2; color: #252b35; font-size: 13px; font-weight: 700; line-height: 19px; }

/* Windows taskbar */
.taskbar { flex: none; display: flex; height: 40px; background: #01040a; color: #fff; }
.task { position: relative; width: 48px; height: 40px; display: grid; place-items: center; background: none; }
.search { display: flex; align-items: center; gap: 10px; flex: 0 1 344px; padding: 0 14px 0 9px; background: #f2f2f2; border-top: 1px solid #ccc; color: #333; }
.search input { flex: 1; min-width: 0; border: 0; padding: 0; background: none; outline: 0; font-size: 14px; line-height: 20px; }
.search input::placeholder { color: #3b3b3b; opacity: 1; }
.cortana { width: 22px; height: 22px; }
.mic { width: 12px; height: 18px; }
.apps { display: flex; gap: 1px; margin-left: 3px; }
.open::after { content: ""; position: absolute; left: 4px; right: 4px; bottom: 0; height: 2px; background: #76b9ed; }
.stacked::after { background: linear-gradient(90deg, #76b9ed 80%, #4a7596 80%); }
.current.task { background: #36393d; }
.current.task::after { left: 0; right: 0; }
.ws { fill: #fff; font: 700 9px "Liberation Sans", sans-serif; }
.tray { margin-left: auto; display: flex; align-items: center; gap: 9px; margin-right: 4px; padding-right: 10px; border-right: 1px solid #555; }
.chevron { margin-left: 13px; }
.line { fill: none; stroke: #fff; stroke-width: 1.200; }
.clock { display: flex; flex-direction: column; align-items: center; width: 60px; font-size: 11px; line-height: 18px; }
.notice { position: relative; width: 26px; height: 24px; margin-left: 8px; }
.count { position: absolute; right: 0; bottom: -4px; width: 17px; height: 17px; border: 1px solid #888; border-radius: 50%; background: #222; color: #fff; font-size: 11px; line-height: 15px; text-align: center; }
```
